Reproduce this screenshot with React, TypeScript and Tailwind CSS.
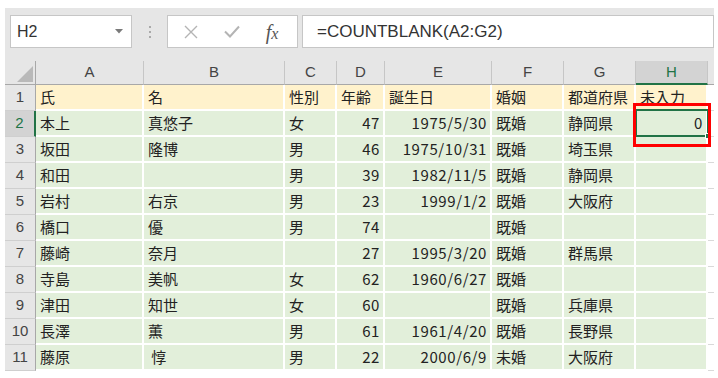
import React from 'react';

const cols = ['A', 'B', 'C', 'D', 'E', 'F', 'G', 'H'];

const rows: string[][] = [
  ['氏', '名', '性別', '年齢', '誕生日', '婚姻', '都道府県', '未入力'],
  ['本上', '真悠子', '女', '47', '1975/5/30', '既婚', '静岡県', '0'],
  ['坂田', '隆博', '男', '46', '1975/10/31', '既婚', '埼玉県', ''],
  ['和田', '', '男', '39', '1982/11/5', '既婚', '静岡県', ''],
  ['岩村', '右京', '男', '23', '1999/1/2', '既婚', '大阪府', ''],
  ['橋口', '優', '男', '74', '', '既婚', '', ''],
  ['藤崎', '奈月', '', '27', '1995/3/20', '既婚', '群馬県', ''],
  ['寺島', '美帆', '女', '62', '1960/6/27', '既婚', '', ''],
  ['津田', '知世', '女', '60', '', '既婚', '兵庫県', ''],
  ['長澤', '薫', '男', '61', '1961/4/20', '既婚', '長野県', ''],
  ['藤原', ' 惇', '男', '22', '2000/6/9', '未婚', '大阪府', ''],
];

const jp = "font-['Noto_Sans_CJK_JP',sans-serif]";
const num = "font-['Noto_Sans_CJK_JP',sans-serif] tracking-[0.6px]";

function FormulaBar() {
  return (
    <div className="flex h-[53px] items-start pt-[7px] pl-[5px]">
      <div className="flex h-[33px] w-[122px] items-center justify-between border border-[#c6c6c6] bg-white pl-[6px] pr-[8px]">
        <span className="font-['Liberation_Sans',sans-serif] text-[16px] text-[#333]">H2</span>
        <svg width="8" height="5" viewBox="0 0 8 5">
          <polygon points="0,0 8,0 4,4.5" fill="#7a7a7a" />
        </svg>
      </div>
      <div className="flex h-[33px] w-[35px] flex-col items-center justify-center gap-[3px]">
        <div className="h-[2px] w-[2px] bg-[#a9a9a9]" />
        <div className="h-[2px] w-[2px] bg-[#a9a9a9]" />
        <div className="h-[2px] w-[2px] bg-[#a9a9a9]" />
      </div>
      <div className="flex h-[33px] w-[131px] items-center border border-[#c6c6c6] bg-white">
        <div className="flex w-[44px] justify-center pl-[2px]">
          <svg width="14" height="14" viewBox="0 0 14 14">
            <path d="M1 1 L13 13 M13 1 L1 13" stroke="#b4b4b4" strokeWidth="1.4" fill="none" />
          </svg>
        </div>
        <div className="flex w-[40px] justify-center">
          <svg width="16" height="13" viewBox="0 0 16 13">
            <path d="M1 6.5 L6 11.5 L15 1.5" stroke="#b4b4b4" strokeWidth="2" fill="none" />
          </svg>
        </div>
        <div className="flex w-[40px] justify-center">
          <span className="font-['Liberation_Serif',serif] text-[20px] italic leading-none text-[#555]">
            f<span className="text-[16px]">x</span>
          </span>
        </div>
      </div>
      <div className="ml-[4px] flex h-[33px] flex-1 items-center border border-[#c6c6c6] bg-white pl-[14px]">
        <span className="font-['Liberation_Sans',sans-serif] text-[17px] text-[#333]">=COUNTBLANK(A2:G2)</span>
      </div>
    </div>
  );
}

function Sheet() {
  return (
    <div className="relative grid grid-cols-[31px_108px_141px_52px_48px_107px_72px_72px_72px_6px] grid-rows-[24px_repeat(11,26px)]">
      {/* corner */}
      <div className="relative border-b border-r border-[#a8a8a8]">
        <svg className="absolute left-0 top-0" width="31" height="24" viewBox="0 0 31 24">
          <polygon points="28,5 28,21 12,21" fill="#b9b9b9" />
        </svg>
      </div>
      {cols.map((c) => (
        <div
          key={c}
          className={
            c === 'H'
              ? "flex items-center justify-center border-b-2 border-r border-b-[#217346] border-r-[#c6c6c6] bg-[#d3d3d3] font-['Liberation_Sans',sans-serif] text-[15px] text-[#217346]"
              : "flex items-center justify-center border-b border-r border-b-[#a8a8a8] border-r-[#c6c6c6] font-['Liberation_Sans',sans-serif] text-[15px] text-[#444]"
          }
        >
          {c}
        </div>
      ))}
      <div className="border-b border-[#a8a8a8]" />

      {rows.map((r, i) => (
        <React.Fragment key={i}>
          <div
            className={
              i === 1
                ? "flex items-center justify-center border-b border-r-2 border-b-[#cfcfcf] border-r-[#217346] bg-[#d3d3d3] font-['Liberation_Sans',sans-serif] text-[15px] text-[#217346]"
                : "flex items-center justify-center border-b border-r border-b-[#cfcfcf] border-r-[#a8a8a8] font-['Liberation_Sans',sans-serif] text-[15px] text-[#444]"
            }
          >
            {i + 1}
          </div>
          {r.map((v, j) => {
            const isNum = i > 0 && (j === 3 || j === 4 || j === 7);
            return (
              <div
                key={j}
                className={
                  (i === 0 ? 'bg-[#fff2cc] ' : 'bg-[#e2efda] ') +
                  'flex items-center overflow-hidden whitespace-pre border-b-2 border-r-2 border-white text-[#222] ' +
                  (isNum ? `justify-end pr-[3px] text-[15px] ${num}` : `pl-[4px] text-[15px] ${jp}`)
                }
              >
                {v}
              </div>
            );
          })}
          <div className="border-b border-[#d9d9d9] bg-white" />
        </React.Fragment>
      ))}

      {/* active cell H2 */}
      <div className="pointer-events-none absolute left-[630px] top-[48px] h-[28px] w-[74px] border-2 border-[#217346]">
        <div className="absolute bottom-[-4px] right-[-4px] h-[6px] w-[6px] border border-white bg-[#217346]" />
      </div>
      {/* red annotation */}
      <div className="pointer-events-none absolute left-[628px] top-[42px] h-[44px] w-[78px] border-[3px] border-[#ff0000]" />
    </div>
  );
}

export default function App() {
  return (
    <div className="h-[378px] w-[718px] bg-white pl-[5px] pt-[8px]">
      <div className="w-[709px] bg-[#e6e6e6]">
        <FormulaBar />
        <Sheet />
      </div>
    </div>
  );
}
